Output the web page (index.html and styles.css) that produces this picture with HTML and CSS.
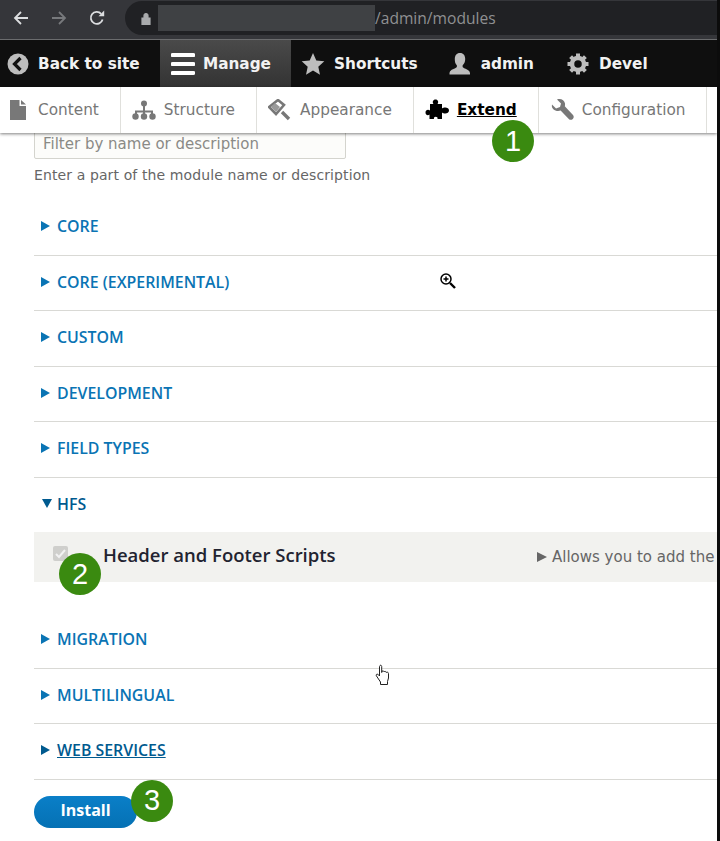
FILE: index.html
```html
<!DOCTYPE html>
<html lang="en">
<head>
<meta charset="utf-8">
<title>Extend</title>
<link rel="stylesheet" href="styles.css">
</head>
<body>
<div class="page">
  <header class="browser">
    <svg class="nav-icon" width="18" height="18" viewBox="0 0 18 18"><path d="M16 9H3M9 3 3 9l6 6" fill="none" stroke="#dcdee0" stroke-width="1.8"/></svg>
    <svg class="nav-icon" width="18" height="18" viewBox="0 0 18 18"><path d="M2 9h13M9 3l6 6-6 6" fill="none" stroke="#77797c" stroke-width="1.8"/></svg>
    <svg class="nav-icon" width="18" height="18" viewBox="0 0 18 18"><path d="M14.6 10.500A6 6 0 1 1 13.200 4.800" fill="none" stroke="#dcdee0" stroke-width="1.8"/><path d="M10.500 7.200h5.700V1.500z" fill="#dcdee0"/></svg>
    <div class="omnibox">
      <svg width="10" height="13" viewBox="0 0 10 13"><path d="M1 6h8v6.500H1zM3 6V3.500a2 2 0 0 1 4 0V6" fill="#a9abad" stroke="#a9abad" stroke-width="1.200"/></svg>
      <span class="redact"></span>
      <span class="url">/admin/modules</span>
    </div>
  </header>

  <nav class="topbar">
    <a class="top-item back">
      <svg width="22" height="22" viewBox="0 0 22 22"><circle cx="11" cy="11" r="10.500" fill="#bdbdbd"/><path d="M13.500 5 7.500 11l6 6" fill="none" stroke="#111" stroke-width="3.200"/></svg>
      Back to site</a>
    <a class="top-item manage">
      <svg width="24" height="24" viewBox="0 0 24 24"><path d="M1.500 3h21M1.500 12h21M1.500 21h21" stroke="#fff" stroke-width="4" stroke-linecap="round"/></svg>
      Manage</a>
    <a class="top-item">
      <svg width="24" height="24" viewBox="0 0 24 24"><path d="m12 1 3.300 7.500 8 .8-6 5.400 1.700 8L12 18.600 5 22.700l1.700-8-6-5.400 8-.8z" fill="#bdbdbd"/></svg>
      Shortcuts</a>
    <a class="top-item">
      <svg width="24" height="24" viewBox="0 0 24 24"><path d="M12 1c3.500 0 5.200 2.600 5.200 6 0 2.700-1 5-2.500 6.200-.5 1.500.2 2.500 2 3.200 2.500 1 5 1.800 5.300 4.600v1.500H1.500V21c.3-2.800 3-3.700 5.300-4.600 1.800-.7 2.500-1.700 2-3.200C7.300 12 6.800 9.700 6.800 7c0-3.400 1.700-6 5.200-6z" fill="#bdbdbd"/></svg>
      admin</a>
    <a class="top-item">
      <svg width="24" height="24" viewBox="0 0 24 24"><circle cx="12" cy="12" r="6" fill="none" stroke="#bdbdbd" stroke-width="4.500"/><path d="M12 1.500v5M12 17.500v5M1.500 12h5M17.500 12h5M4.600 4.600l3.500 3.500M15.900 15.900l3.500 3.500M4.600 19.400l3.500-3.500M15.900 8.100l3.500-3.500" stroke="#bdbdbd" stroke-width="4"/></svg>
      Devel</a>
  </nav>

  <nav class="tray">
    <a class="tray-item first">
      <svg width="16" height="20" viewBox="0 0 16 20"><path d="M0 0h9.500v6H16v14H0zM11 0l5 4.500h-5z" fill="#787878"/></svg>
      Content</a>
    <a class="tray-item">
      <svg width="24" height="20" viewBox="0 0 24 20"><path d="M12 4v11M4 16v-4.500h16V16" fill="none" stroke="#787878" stroke-width="2"/><circle cx="12" cy="3.500" r="3" fill="#787878"/><circle cx="3.500" cy="16.500" r="3.200" fill="#787878"/><circle cx="12" cy="16.500" r="3.200" fill="#787878"/><circle cx="20.500" cy="16.500" r="3.200" fill="#787878"/></svg>
      Structure</a>
    <a class="tray-item">
      <svg width="24" height="22" viewBox="0 0 24 22"><path d="M10 1 1 8l7 7 8-9z" fill="none" stroke="#787878" stroke-width="2.600"/><path d="M7 4l-4 4 5 5 4-5z" fill="#9a9a9a"/><path d="m14 13 7 7" stroke="#787878" stroke-width="3.400"/></svg>
      Appearance</a>
    <a class="tray-item active">
      <svg width="25" height="22" viewBox="0 0 25 22"><path d="M5 5h3.500C7 3 8 .5 10.500.5S14 3 12.500 5H17v4.500c2-1.500 7-1.500 7 2s-5 3.500-7 2V20h-4.500c1-3-4.500-3-3.500 0H4.500v-4.500C3 17 .5 16 .5 13.500S3 10 5 11.500z" fill="#000"/></svg>
      <span class="active-label">Extend</span></a>
    <a class="tray-item">
      <svg width="24" height="24" viewBox="0 0 24 24"><path d="M2 6.500 6 10.500l4-1.500 1-3.500L7 1.500c3.500-1.500 7.500.5 8 4 .2 1 0 2-.2 2.700L23 17c1 1.200 1 2.700-.2 3.900-1.200 1.200-3 1.200-4 0l-8.200-8.300c-4 1.500-9.800-1-8.600-6.100z" fill="#787878"/></svg>
      Configuration</a>
  </nav>

  <main class="content">
    <div class="filter">
      <div class="filter-input">Filter by name or description</div>
      <p class="filter-help">Enter a part of the module name or description</p>
    </div>

    <details class="pkg"><summary>CORE</summary></details>
    <details class="pkg"><summary>CORE (EXPERIMENTAL)</summary></details>
    <details class="pkg"><summary>CUSTOM</summary></details>
    <details class="pkg"><summary>DEVELOPMENT</summary></details>
    <details class="pkg"><summary>FIELD TYPES</summary></details>
    <details class="pkg open-pkg" open>
      <summary>HFS</summary>
      <div class="module">
        <span class="check"><svg width="11" height="10" viewBox="0 0 11 10"><path d="m1 5 3 3 6-7" fill="none" stroke="#f2f2f2" stroke-width="2"/></svg></span>
        <span class="module-name">Header and Footer Scripts</span>
        <span class="module-desc"><i class="desc-arrow"></i>Allows you to add the</span>
      </div>
    </details>
    <details class="pkg"><summary>MIGRATION</summary></details>
    <details class="pkg"><summary>MULTILINGUAL</summary></details>
    <details class="pkg"><summary class="hovered">WEB SERVICES</summary></details>

    <div class="actions"><button class="install" type="button">Install</button></div>
  </main>

  <span class="badge badge-1">1</span>
  <span class="badge badge-2">2</span>
  <span class="badge badge-3">3</span>

  <svg class="cursor cursor-zoom" width="18" height="18" viewBox="0 0 18 18"><circle cx="7" cy="7" r="5" fill="#fff" stroke="#000" stroke-width="1.500"/><path d="M4.500 7h5M7 4.500v5" stroke="#000" stroke-width="1.500"/><path d="m11 11 5 5" stroke="#000" stroke-width="2.400"/></svg>
  <svg class="cursor cursor-hand" width="16" height="22" viewBox="0 0 16 22"><path d="M5 1.500c.8-.7 1.700 0 1.700 1v6l.5-1.500c1-.5 1.800 0 1.800 1l.5-.5c1-.3 1.600.2 1.700 1l.6-.3c1-.2 1.700.4 1.700 1.300v4.500l-1 3.500v3H5.500v-2.500L1.500 12c-.8-1 0-2.300 1.300-1.800L4.500 12V2.500z" fill="#fff" stroke="#222" stroke-width="1"/></svg>
</div>
</body>
</html>
```

FILE: styles.css
```css
* { box-sizing: border-box; }
html, body { margin: 0; padding: 0; background: #fff; }
.page {
  position: relative;
  width: 720px;
  height: 841px;
  overflow: hidden;
  border-right: 3px solid #0c0c0c;
  font-family: "Open Sans", "Liberation Sans", sans-serif;
}
.browser {
  height: 40px;
  background: #35363a;
  border-bottom: 1px solid #6b6c6e;
  display: flex;
  align-items: center;
  padding: 0 0 3px 12px;
  gap: 21px;
}
.nav-icon { flex: none; margin-right: -1px; }
.omnibox {
  width: 593px;
  height: 34px;
  margin-left: -1px;
  background: #202124;
  border-radius: 17px 0 0 17px;
  display: flex;
  align-items: center;
  padding-left: 16px;
  flex: none;
}
.redact { width: 217px; height: 26px; margin-left: 7px; background: #3f4144; }
.url { color: #8f9092; font-size: 15.600px; margin-top: -1px; }
.topbar {
  height: 47px;
  background: #0f0f0f;
  display: flex;
  align-items: stretch;
}
.top-item {
  display: flex;
  align-items: center;
  gap: 9px;
  padding: 0 20px 0 10px;
  color: #f2f2f2;
  font-family: "DejaVu Sans", sans-serif;
  font-weight: 700;
  font-size: 15.300px;
  white-space: nowrap;
}
.top-item:last-child { margin-left: 2px; }
.back { width: 160px; padding-left: 7px; }
.manage {
  width: 131px;
  gap: 8px;
  padding-left: 11px;
  background: linear-gradient(#4a4a4a, #333);
}
.tray {
  height: 46px;
  background: #fff;
  display: flex;
  box-shadow: 0 1px 3px rgba(0,0,0,.5);
  position: relative;
}
.tray-item {
  display: flex;
  align-items: center;
  gap: 8px;
  padding: 0 21px 0 11px;
  border-right: 1px solid #e0e0dc;
  color: #777;
  font-family: "DejaVu Sans", sans-serif;
  font-size: 15.300px;
  white-space: nowrap;
}
.first { gap: 12px; padding-left: 10px; }
.active { color: #000; font-weight: 700; gap: 7px; }
.active-label { text-decoration: underline; }
.content { padding: 0 0 0 34px; }
.filter { padding-bottom: 16px; }
.filter-input {
  width: 312px;
  height: 28px;
  margin-top: -2px;
  background: #fcfcfa;
  border: 1px solid #d4d4ce;
  border-radius: 2px;
  padding: 0 8px;
  color: #8a8a86;
  font-family: "DejaVu Sans", sans-serif;
  font-size: 15px;
  line-height: 24px;
}
.filter-help {
  margin: 7px 0 0;
  color: #666;
  font-family: "DejaVu Sans", sans-serif;
  font-size: 14px;
  letter-spacing: .11px;
  line-height: 18px;
  white-space: nowrap;
}
.pkg { border-bottom: 1px solid #d9d9d5; }
.pkg summary {
  list-style: none;
  height: 54.500px;
  padding-bottom: 2px;
  display: flex;
  align-items: center;
  color: #0a74b4;
  font-size: 15.900px;
  font-weight: 600;
}
.pkg summary::before {
  content: "";
  width: 0;
  height: 0;
  margin: 0 7px;
  border-left: 9px solid #0a74b4;
  border-top: 5px solid transparent;
  border-bottom: 5px solid transparent;
}
.open-pkg { border-bottom: 0; }
.open-pkg summary { color: #005a8f; }
.open-pkg summary::before {
  margin: 0 5px 0 8px;
  border-top: 9px solid #005a8f;
  border-left: 5px solid transparent;
  border-right: 5px solid transparent;
  border-bottom: 0;
}
.hovered { text-decoration: underline; color: #005a8f !important; }
.hovered::before { border-left-color: #005a8f !important; }
.module {
  height: 50px;
  margin-bottom: 31px;
  background: #f2f2ef;
  display: flex;
  align-items: center;
  overflow: hidden;
  white-space: nowrap;
}
.check {
  width: 15px;
  height: 15px;
  margin-left: 19px;
  margin-bottom: 7px;
  border-radius: 2px;
  background: #cfcfcc;
  display: flex;
  align-items: center;
  justify-content: center;
  flex: none;
}
.module-name {
  margin-left: 35px;
  margin-bottom: 6px;
  width: 434px;
  flex: none;
  color: #222330;
  font-size: 18.500px;
  font-weight: 600;
}
.module-desc {
  display: flex;
  align-items: center;
  color: #666;
  font-family: "DejaVu Sans", sans-serif;
  font-size: 15px;
}
.desc-arrow {
  width: 0;
  height: 0;
  margin-right: 5px;
  border-left: 10px solid #666;
  border-top: 5px solid transparent;
  border-bottom: 5px solid transparent;
}
.actions { padding-top: 16px; }
.install {
  display: block;
  width: 103px;
  height: 32px;
  border: 0;
  border-radius: 16px;
  background: linear-gradient(#0a7fc8, #0571b4);
  color: #fff;
  font-family: "Open Sans", sans-serif;
  font-size: 16px;
  font-weight: 700;
  padding: 0 0 3px;
}
.badge {
  position: absolute;
  width: 42px;
  height: 42px;
  border-radius: 50%;
  background: #3a8a10;
  color: #fff;
  font-family: "Liberation Sans", sans-serif;
  font-size: 29px;
  line-height: 42px;
  text-align: center;
}
.badge-1 { left: 492px; top: 120px; }
.badge-2 { left: 59px; top: 553px; }
.badge-3 { left: 131px; top: 780px; line-height: 40px; }
.cursor { position: absolute; }
.cursor-zoom { left: 439px; top: 272px; }
.cursor-hand { left: 375px; top: 664px; }
```
